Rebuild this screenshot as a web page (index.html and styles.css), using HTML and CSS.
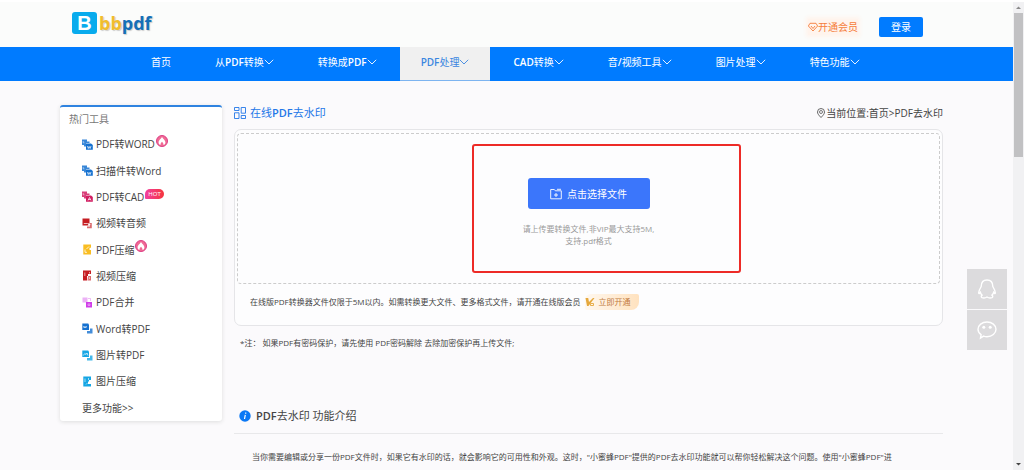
FILE: index.html
```html
<!DOCTYPE html>
<html lang="zh-CN">
<head>
<meta charset="utf-8">
<title>在线PDF去水印</title>
<link rel="stylesheet" href="styles.css">
</head>
<body>
<svg class="sprite" aria-hidden="true">
  <symbol id="chev" viewBox="0 0 10 10"><path d="M.8 2.800 5 7 9.200 2.800" fill="none" stroke="currentColor" stroke-width=".9"/></symbol>
  <symbol id="flame" viewBox="0 0 12 12"><circle cx="6" cy="6" r="5.500" fill="#f06a94" stroke="#dc3f86"/><path d="M6 1.800C6.500 3.600 9.400 4.800 9.400 7.400 9.400 8.900 8.400 9.700 7.500 10 7.600 8.500 7 7.800 6 6.800 5 7.800 4.400 8.500 4.500 10 3.600 9.700 2.600 8.900 2.600 7.400 2.600 4.800 5.600 3.600 6 1.800Z" fill="#fff"/></symbol>
  <symbol id="pair" viewBox="0 0 11 11"><path d="M0 .5h5v2h2.500V4H4v3.500H2V6H0Z" opacity=".85"/><path d="M4 4.500H9L10.800 6v4.800H4Z"/><path d="M1.200 2v1.800h1.200" fill="none" stroke="#fff" stroke-width=".5"/></symbol>
</svg>
<div class="window">
  <div class="page">
    <header class="header">
      <a class="logo" href="#"><span class="logo-mark">B</span><span class="logo-bb">bb</span><span class="logo-pdf">pdf</span></a>
      <div class="account">
        <a class="vip" href="#"><svg class="i10" viewBox="0 0 10 10"><path d="M2 1.300h6L9.600 4 5 9 .4 4ZM3 4l2 2.500L7 4" fill="none" stroke="currentColor" stroke-width=".9"/></svg>开通会员</a>
        <button class="login" type="button">登录</button>
      </div>
    </header>
    <nav class="nav">
      <a href="#">首页</a>
      <a href="#">从<b>PDF</b>转换<svg class="chev"><use href="#chev"/></svg></a>
      <a href="#">转换成<b>PDF</b><svg class="chev"><use href="#chev"/></svg></a>
      <a href="#" class="active"><b>PDF</b>处理<svg class="chev"><use href="#chev"/></svg></a>
      <a href="#"><b>CAD</b>转换<svg class="chev"><use href="#chev"/></svg></a>
      <a href="#">音<b>/</b>视频工具<svg class="chev"><use href="#chev"/></svg></a>
      <a href="#">图片处理<svg class="chev"><use href="#chev"/></svg></a>
      <a href="#">特色功能<svg class="chev"><use href="#chev"/></svg></a>
    </nav>
    <div class="columns">
      <aside class="sidebar">
        <h2>热门工具</h2>
        <ul>
          <li><a href="#"><svg class="tool blue" viewBox="0 0 11 11"><use href="#pair"/><path d="m5.500 7 .8 2.500.9-2 .9 2L9 7" fill="none" stroke="#fff" stroke-width=".7"/></svg>PDF转WORD</a><svg class="flame"><use href="#flame"/></svg></li>
          <li><a href="#"><svg class="tool blue" viewBox="0 0 11 11"><use href="#pair"/><path d="m5.500 7 .8 2.500.9-2 .9 2L9 7" fill="none" stroke="#fff" stroke-width=".7"/></svg>扫描件转Word</a></li>
          <li><a href="#"><svg class="tool rose" viewBox="0 0 11 11"><use href="#pair"/><path d="m6 9.500 1.500-3 1.500 3M6.500 8.500h2" fill="none" stroke="#fff" stroke-width=".7"/></svg>PDF转CAD</a><span class="hot">HOT</span></li>
          <li><a href="#"><svg class="tool red" viewBox="0 0 11 11"><path d="M.5.5h7v7h-7Z"/><path d="M9.800 5v5.300H5V8.500h3V5Z" opacity=".65"/><path d="M1.800 5.500h4" stroke="#fff" stroke-width=".7"/><path d="m6.200 5 2.500 1.500L6.200 8Z" fill="#fff"/></svg>视频转音频</a></li>
          <li><a href="#"><svg class="tool yellow" viewBox="0 0 11 11"><path d="M1.300.5H9v3.200H7.500V6H9v4.500H1.300Z"/><path d="M7 2.500 4.500 5M3 5.500v2.800h2" fill="none" stroke="#fff" stroke-width=".8"/></svg>PDF压缩</a><svg class="flame"><use href="#flame"/></svg></li>
          <li><a href="#"><svg class="tool red" viewBox="0 0 11 11"><path d="M1 .5h8V4H6v2H5v4.500H1Z"/><path d="M6 6h3v4.500H5.500Z" opacity=".65"/><path d="M2.800 2.500V6M7.500 2v1.500M6.500 7l1.500 1-1.500 1" fill="none" stroke="#fff" stroke-width=".6"/></svg>视频压缩</a></li>
          <li><a href="#"><svg class="tool purple" viewBox="0 0 11 11"><path d="M.5.5h5v5h-5Z" opacity=".4"/><path d="M4 5h6v5.500H4Z"/><path d="M6 1.500h2.500V4" fill="none" stroke="currentColor" stroke-width=".7" opacity=".5"/><path d="M6 7h2v1.500H6Z" fill="none" stroke="#fff" stroke-width=".4"/></svg>PDF合并</a></li>
          <li><a href="#"><svg class="tool blue" viewBox="0 0 11 11"><path d="M.3.5h6L7 2v5H.3Z"/><path d="M8 5.500h2.500v5H5V8h3Z" opacity=".8"/><path d="m1.500 3 .7 2 .8-1.700L3.800 5l.8-2M1.500 8.500v1.200H4" fill="none" stroke="#fff" stroke-width=".6"/></svg>Word转PDF</a></li>
          <li><a href="#"><svg class="tool cyan" viewBox="0 0 11 11"><path d="M.3.5h6L7 2v5H.3Z"/><path d="M8 5.500h2.500v5H5V8h3Z" opacity=".8"/><path d="m1.300 5.500 1.500-2 1.200 1L5 3l1 2.500" fill="none" stroke="#fff" stroke-width=".7"/></svg>图片转PDF</a></li>
          <li><a href="#"><svg class="tool cyan" viewBox="0 0 11 11"><path d="M1.300.5H9V4H7v1.500H6V8h3v2.500H1.300Z"/><path d="M3 2.500V6M6.500 2v2M4 8.500l1.500-1.500" fill="none" stroke="#fff" stroke-width=".6"/></svg>图片压缩</a></li>
          <li><a href="#">更多功能&gt;&gt;</a></li>
        </ul>
      </aside>
      <main class="main">
        <div class="title-row">
          <h1><svg class="i12" viewBox="0 0 12 12"><path d="M.5.500h4.500v3H.5ZM.5 5.800h4.500v5.700H.5ZM7.200.500h4.300v5.700H7.200ZM7.200 8.500h4.300v3H7.200Z" fill="none" stroke="currentColor" stroke-width=".9"/></svg><span>在线<b>PDF</b>去水印</span></h1>
          <div class="crumbs"><svg class="i10" viewBox="0 0 10 10"><path d="M5 9.500C2.500 7 1.500 5.500 1.500 4a3.500 3.500 0 0 1 7 0C8.500 5.500 7.500 7 5 9.500Z" fill="none" stroke="currentColor" stroke-width=".8"/><circle cx="5" cy="4" r="1.500" fill="none" stroke="currentColor" stroke-width=".7"/></svg>当前位置:<a href="#">首页</a>&gt;<a href="#">PDF去水印</a></div>
        </div>
        <section class="card">
          <div class="drop">
            <button class="choose" type="button"><svg class="i12" viewBox="0 0 12 12"><path d="M.7 1.500h3.600l1 1.300h6v8H.7ZM6 5v4M4 7h4M7 1.300h4" fill="none" stroke="currentColor" stroke-width=".9"/></svg>点击选择文件</button>
            <p>请上传要转换文件,非VIP最大支持5M,<br>支持.pdf格式</p>
            <div class="highlight"></div>
          </div>
          <div class="limit">在线版PDF转换器文件仅限于5M以内。如需转换更大文件、更多格式文件，请开通在线版会员
            <a class="open" href="#"><svg class="i10" viewBox="0 0 10 10"><path d="M.5 1h2.700L4 5l4-4h1.500L3.500 9H2Z" fill="#e5a83c"/><path d="M5.500 6.500h3v2h-3Z" fill="none" stroke="#e5a83c" stroke-width=".9"/></svg>立即开通</a></div>
        </section>
        <p class="note">*注： 如果PDF有密码保护，请先使用 <a href="#">PDF密码解除</a> 去除加密保护再上传文件;</p>
        <section class="intro">
          <h2><svg class="i12" viewBox="0 0 12 12"><circle cx="6" cy="6" r="5.700" fill="#0a78f5"/><path d="M6.700 2.600v1.200M6.300 4.900 5.500 9" stroke="#fff" stroke-width="1.200"/></svg><span><b>PDF</b>去水印 功能介绍</span></h2>
          <p>当你需要编辑或分享一份PDF文件时，如果它有水印的话，就会影响它的可用性和外观。这时，"小蜜蜂PDF"提供的PDF去水印功能就可以帮你轻松解决这个问题。使用"小蜜蜂PDF"进</p>
        </section>
      </main>
    </div>
    <div class="contact">
      <button type="button" aria-label="QQ"><svg viewBox="0 0 20 20"><path d="M10 1C6 1 4.200 3.800 4.200 7.500 3 9.500 1.500 12 1.700 14c.2 1 1 .5 1.700-.6.3 1.200.8 2 1.600 2.700-1 .6-1 2 0 2.500 1.500.6 3.800.2 5-.6 1.200.8 3.500 1.200 5 .6 1-.5 1-1.900 0-2.500.8-.7 1.300-1.500 1.600-2.700.7 1.100 1.500 1.600 1.700.6.2-2-1.300-4.500-2.500-6.500C15.800 3.800 14 1 10 1Z" fill="none" stroke="#fff" stroke-width="1.400"/></svg></button>
      <button type="button" aria-label="微信"><svg viewBox="0 0 20 20"><path d="M10 2c5 0 9 3.200 9 7.300s-4 7.400-9 7.400c-1.300 0-2.300-.2-3.400-.6L3.500 18l.6-3.300C2.200 13.400 1 11.500 1 9.300 1 5.200 5 2 10 2Z" fill="none" stroke="#fff" stroke-width="1.400"/><circle cx="6.800" cy="7.300" r="1.500" fill="#fff"/><circle cx="13.200" cy="7.300" r="1.500" fill="#fff"/></svg></button>
    </div>
  </div>
  <div class="scroll">
    <svg viewBox="0 0 11 11"><path d="M3 7h5L5.500 4.500Z" fill="#8a8a8a"/></svg>
    <div class="thumb"></div>
    <svg viewBox="0 0 11 11"><path d="M3 4h5L5.500 6.500Z" fill="#444"/></svg>
  </div>
</div>
</body>
</html>
```
FILE: styles.css
```css
* { box-sizing: border-box; }
body {
  margin: 0;
  background: #fff;
  color: #444;
  font: 10px/16px "Open Sans", "Noto Sans CJK SC", sans-serif;
}
h1, h2, p, ul { margin: 0; padding: 0; font-weight: 400; }
b { font-weight: 600; }
ul { list-style: none; }
a { color: inherit; text-decoration: none; }
button { font: inherit; border: 0; padding: 0; cursor: pointer; }
svg { flex: none; display: block; }
.sprite { position: absolute; width: 0; height: 0; }
.i10 { width: 10px; height: 10px; }
.i12 { width: 12px; height: 12px; }

.window {
  display: grid;
  grid-template-columns: 1fr 11px;
  height: 100vh;
  padding-top: 2px;
  overflow: hidden;
}
.page { background: #fbfafc; min-width: 0; overflow: hidden; }

.header {
  display: flex;
  align-items: center;
  justify-content: space-between;
  height: 45px;
  padding: 0 90px 0 72px;
  background: #fbfcfb;
}
.logo {
  display: flex;
  align-items: center;
  padding-bottom: 4px;
  font-size: 18px;
  font-weight: 700;
  line-height: 22px;
}
.logo-mark {
  width: 25px;
  margin-right: 2px;
  border-radius: 3px;
  background: #08abed;
  color: #fff;
  font-family: "Liberation Sans", sans-serif;
  font-size: 20px;
  text-align: center;
}
.logo-bb { color: #f1bd2d; text-shadow: 1px 1px 1px #ccc; }
.logo-pdf { color: #156fb8; text-shadow: 1px 1px 1px #ccc; }
.account { display: flex; align-items: center; gap: 21px; padding-top: 5px; }
.vip {
  display: flex;
  align-items: center;
  color: #f57d3b;
  background: #fff4ed;
  box-shadow: 0 0 4px 2px #fff4ed;
}
.login { width: 44px; height: 20px; border-radius: 2px; background: #007bff; color: #fff; }

.nav {
  display: flex;
  gap: 2px;
  height: 34px;
  padding-left: 130px;
  background: #007bff;
  color: #fff;
}
.nav a { display: flex; padding: 7px 21px 0; }
.nav .active { background: #f0f0f0; color: #3b86e0; border-bottom: 1px solid #7db4f0; }
.chev { width: 10px; height: 10px; margin-top: 3px; }

.columns {
  display: grid;
  grid-template-columns: 162px 1fr;
  gap: 12px;
  align-items: start;
  padding: 24px 70px 0 60px;
}
.sidebar {
  border-top: 2px solid #2f83e0;
  border-radius: 3px;
  background: #fff;
  box-shadow: 0 1px 4px #ddd;
}
.sidebar h2 { padding: 4px 9px 0; font-size: 10px; color: #777; }
.sidebar ul {
  display: grid;
  grid-auto-rows: 1fr;
  min-height: 290px;
  margin-top: 4px;
  padding-left: 22px;
}
.sidebar li { display: flex; align-items: center; }
.sidebar li a { display: flex; align-items: center; gap: 3px; }
.tool { width: 11px; height: 11px; fill: currentColor; }
.blue { color: #1571d0; }
.rose { color: #d11c60; }
.red { color: #c51d22; }
.yellow { color: #f9bd22; }
.purple { color: #d03ce8; }
.cyan { color: #16a6e4; }
.flame { width: 12px; height: 12px; margin: 0 0 7px 1px; }
.hot {
  margin: 0 0 6px 1px;
  padding: 0 3px;
  border-radius: 5px 5px 5px 1px;
  background: linear-gradient(90deg, #f23fa0, #f5353c);
  color: #fff;
  font-size: 6px;
  line-height: 10px;
}

.title-row { display: flex; justify-content: space-between; align-items: center; height: 15px; }
.title-row h1 { display: flex; align-items: center; gap: 4px; font-size: 11px; color: #2377e8; }
.crumbs { display: flex; align-items: center; }
.card { margin-top: 9px; padding: 3px 2px 0; border: 1px solid #e5e5e8; border-radius: 7px; background: #fdfdfe; }
.drop {
  position: relative;
  display: flex;
  flex-direction: column;
  align-items: center;
  min-height: 151px;
  padding-top: 44px;
  border: 1px dashed #ccc;
  border-radius: 4px;
}
.choose {
  display: flex;
  align-items: center;
  justify-content: center;
  gap: 5px;
  width: 122px;
  height: 31px;
  border-radius: 3px;
  background: #3b76fb;
  color: #fff;
}
.drop p { margin-top: 14px; font-size: 8px; line-height: 12px; text-align: center; color: #999; }
.highlight {
  position: absolute;
  top: 10px;
  left: calc(50% - 117px);
  width: 269px;
  height: 129px;
  border: 2px solid #ed2b27;
  border-radius: 3px;
}
.limit { display: flex; align-items: center; gap: 4px; height: 41px; padding: 0 13px 6px; font-size: 8px; }
.open {
  display: flex;
  align-items: center;
  gap: 4px;
  padding-right: 8px;
  border-radius: 6px 2px 8px 2px;
  background: linear-gradient(90deg, #fff8ef, #ffe2bf);
  color: #c27b3f;
}
.note { margin-top: 9px; padding-left: 6px; font-size: 8px; }
.intro { margin-top: 57px; }
.intro h2 {
  display: flex;
  align-items: center;
  gap: 5px;
  height: 26px;
  padding: 0 5px 9px;
  border-bottom: 1px solid #e8e8ea;
  font-size: 11px;
}
.intro p { margin-top: 15px; padding-left: 18px; font-size: 8px; white-space: nowrap; }

.contact { position: fixed; top: 269px; right: 17px; display: grid; gap: 1px; }
.contact button { display: grid; place-items: center; width: 40px; height: 40px; background: #dcdbdd; }
.contact svg { width: 20px; height: 20px; }

.scroll { display: flex; flex-direction: column; background: #f1f1f3; }
.scroll svg { width: 11px; height: 11px; }
.scroll svg:last-child { margin-top: auto; }
.thumb { height: 144px; margin: 0 1px; background: #c1c1c3; }
```
